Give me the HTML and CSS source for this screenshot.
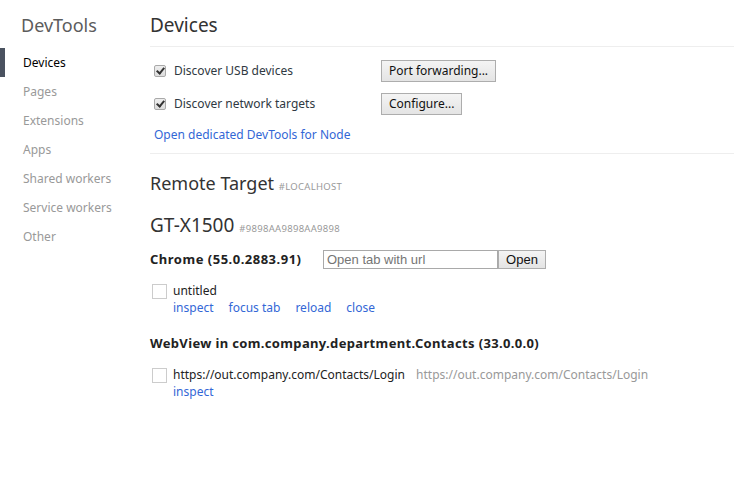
FILE: index.html
```html
<!DOCTYPE html>
<html>
<head>
<meta charset="utf-8">
<link rel="stylesheet" href="styles.css">
</head>
<body>
<div class="app">
  <nav class="sidebar">
    <div class="brand">DevTools</div>
    <ul class="nav">
      <li class="nav-item active">Devices</li>
      <li class="nav-item">Pages</li>
      <li class="nav-item">Extensions</li>
      <li class="nav-item">Apps</li>
      <li class="nav-item">Shared workers</li>
      <li class="nav-item">Service workers</li>
      <li class="nav-item">Other</li>
    </ul>
  </nav>
  <main class="content">
    <h1 class="page-title">Devices</h1>
    <section class="settings">
      <div class="setting-row">
        <label class="check-label"><span class="cb-checked"></span>Discover USB devices</label>
        <button class="btn">Port forwarding...</button>
      </div>
      <div class="setting-row">
        <label class="check-label"><span class="cb-checked"></span>Discover network targets</label>
        <button class="btn">Configure...</button>
      </div>
      <a class="link node-link">Open dedicated DevTools for Node</a>
    </section>
    <section class="remote">
      <h2 class="remote-title">Remote Target <span class="tag">#LOCALHOST</span></h2>
      <h2 class="device-title">GT-X1500 <span class="tag">#9898AA9898AA9898</span></h2>
      <div class="browser-row">
        <span class="browser-name">Chrome (55.0.2883.91)</span>
        <div class="open-tab">
          <input class="url-input" type="text" placeholder="Open tab with url">
          <button class="open-btn">Open</button>
        </div>
      </div>
      <div class="target">
        <span class="thumb"></span>
        <div class="target-body">
          <div class="target-name">untitled</div>
          <div class="actions">
            <a class="link">inspect</a>
            <a class="link">focus tab</a>
            <a class="link">reload</a>
            <a class="link">close</a>
          </div>
        </div>
      </div>
      <div class="browser-row webview">
        <span class="browser-name">WebView in com.company.department.Contacts (33.0.0.0)</span>
      </div>
      <div class="target">
        <span class="thumb"></span>
        <div class="target-body">
          <div class="target-name">https://out.company.com/Contacts/Login <span class="target-url">https://out.company.com/Contacts/Login</span></div>
          <div class="actions">
            <a class="link">inspect</a>
          </div>
        </div>
      </div>
    </section>
  </main>
</div>
</body>
</html>
```
FILE: styles.css
```css
* { box-sizing: border-box; }
html, body { margin: 0; padding: 0; background: #fff; }
body {
  font-family: "Noto Sans", "Open Sans", sans-serif;
  font-size: 12px;
  color: #303942;
}
.app { display: flex; width: 734px; height: 497px; }
.sidebar { width: 150px; flex: none; }
.brand {
  font-size: 18px;
  color: #5c5c5c;
  padding: 12px 0 0 21px;
  height: 48px;
  line-height: 26px;
}
.nav { list-style: none; margin: 0; padding: 0; }
.nav-item {
  height: 29px;
  line-height: 29px;
  color: #999;
  font-size: 12px;
  border-left: 5px solid transparent;
  padding-left: 18px;
}
.nav-item.active { color: #000; border-left-color: #4a5260; }
.content { flex: 1; }
.page-title {
  margin: 0;
  font-weight: normal;
  font-size: 19px;
  color: #333;
  height: 47px;
  line-height: 26px;
  padding-top: 12px;
  border-bottom: 1px solid #eee;
}
.settings {
  padding: 7px 0 9px 4px;
  border-bottom: 1px solid #eee;
}
.setting-row {
  display: flex;
  align-items: center;
  height: 33px;
}
.check-label {
  display: flex;
  align-items: center;
  width: 227px;
}
.cb-checked {
  width: 12px; height: 12px;
  margin-right: 8px;
  border: 1px solid #a9a9a9;
  border-radius: 2px;
  background: linear-gradient(#eee, #ddd);
  position: relative;
}
.cb-checked::after {
  content: "";
  position: absolute;
  left: 3px; top: 0px;
  width: 3px; height: 6px;
  border: solid #333;
  border-width: 0 2px 2px 0;
  transform: rotate(40deg);
}
.btn {
  font-family: "Noto Sans", "Open Sans", sans-serif;
  font-size: 12px;
  color: #111;
  height: 22px;
  padding: 0 7px;
  border: 1px solid #adadad;
  background: linear-gradient(#f4f4f4, #e4e4e4);
  border-radius: 0;
  line-height: 18px;
}
.link { color: #3367d6; cursor: pointer; }
.node-link { display: block; margin-top: 6px; line-height: 18px; }
.remote-title, .device-title {
  margin: 0;
  font-weight: normal;
  color: #333;
}
.remote-title { font-size: 18px; padding-top: 17px; line-height: 24px; }
.device-title { font-size: 19px; padding-top: 14px; line-height: 24px; }
.tag { font-size: 9.5px; color: #999; letter-spacing: 0.3px; }
.browser-row {
  display: flex;
  align-items: center;
  margin-top: 8px;
  height: 20px;
}
.browser-name {
  font-weight: bold;
  font-size: 13px;
  letter-spacing: 0.5px;
  color: #222;
  width: 173px;
  white-space: nowrap;
}
.open-tab { display: flex; }
.url-input {
  width: 175px; height: 19px;
  border: 1px solid #a9a9a9;
  font-family: "Liberation Sans", Arial, sans-serif;
  font-size: 13px;
  padding: 0 3px;
  margin: 0;
}
.url-input::placeholder { color: #757575; }
.open-btn {
  font-family: "Liberation Sans", Arial, sans-serif;
  font-size: 13px;
  height: 19px;
  width: 48px;
  margin: 0;
  padding: 0;
  border: 1px solid #adadad;
  background: linear-gradient(#f4f4f4, #e4e4e4);
  color: #111;
}
.target { display: flex; margin-top: 13px; }
.thumb {
  width: 15px; height: 15px;
  border: 1px solid #ccc;
  margin: 2px 6px 0 2px;
  flex: none;
}
.target-name { color: #222; line-height: 17px; }
.target-url { color: #999; margin-left: 8px; }
.actions { display: flex; gap: 15px; line-height: 17px; }
.browser-row.webview { margin-top: 17px; }
.browser-row.webview .browser-name { letter-spacing: 0.35px; }
```
